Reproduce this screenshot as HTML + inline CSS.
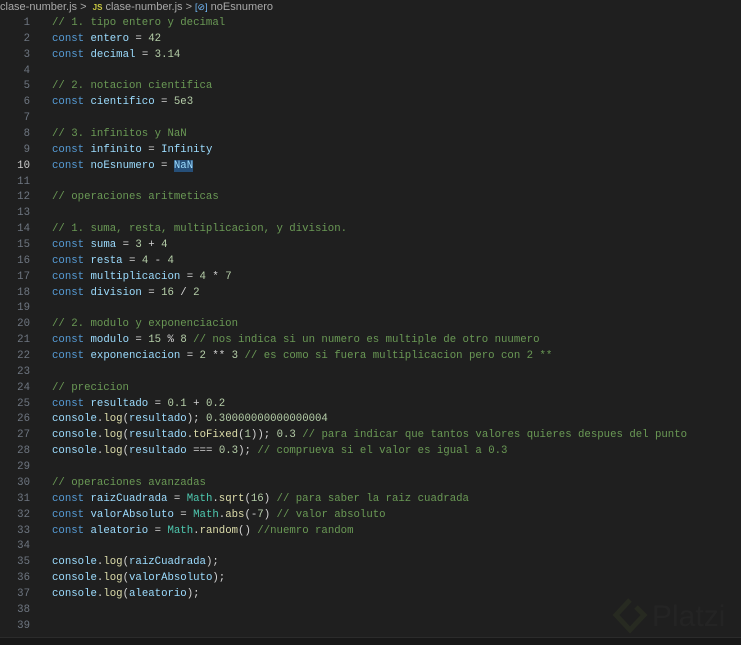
<!DOCTYPE html>
<html><head><style>
body{margin:0;width:741px;height:644px;background:#1f1f1f;overflow:hidden;position:relative;font-family:"Liberation Mono",monospace;}
.bc{position:absolute;top:0;left:0;height:14px;font:11px "Liberation Sans",sans-serif;color:#a9a9a9;white-space:nowrap;line-height:14px;}
.bc .js{color:#cbcb41;font-weight:bold;font-size:8px;}
.bc .v{color:#75beff;font-size:9px;}
.code{position:absolute;top:16px;left:0;}
.l{height:15.87px;line-height:15.87px;font-size:10.7px;white-space:pre;position:relative;}
.n{position:absolute;left:0;width:30px;text-align:right;color:#6e7681;}
.n.a{color:#ccc;}
.t{position:absolute;left:52px;color:#d4d4d4;}
.k{color:#569cd6}.v{color:#9cdcfe}.c{color:#6a9955}.m{color:#b5cea8}.f{color:#dcdcaa}.g{color:#4ec9b0}
.sel{background:#264f78}
.status{position:absolute;left:0;top:637px;width:741px;height:7px;background:#181818;border-top:1px solid #2b2b2b;}
.wm{position:absolute;font:30px "Liberation Sans",sans-serif;color:#242424;}
</style></head><body>
<div class="bc">clase-number.js &gt; &nbsp;<span class="js">JS</span> clase-number.js &gt; <span class="v">[⊘]</span> noEsnumero</div>
<div class="code">
<div class="l"><span class="n">1</span><span class="t c">// 1. tipo entero y decimal</span></div>
<div class="l"><span class="n">2</span><span class="t"><span class="k">const</span> <span class="v">entero</span> = <span class="m">42</span></span></div>
<div class="l"><span class="n">3</span><span class="t"><span class="k">const</span> <span class="v">decimal</span> = <span class="m">3.14</span></span></div>
<div class="l"><span class="n">4</span></div>
<div class="l"><span class="n">5</span><span class="t c">// 2. notacion cientifica</span></div>
<div class="l"><span class="n">6</span><span class="t"><span class="k">const</span> <span class="v">cientifico</span> = <span class="m">5e3</span></span></div>
<div class="l"><span class="n">7</span></div>
<div class="l"><span class="n">8</span><span class="t c">// 3. infinitos y NaN</span></div>
<div class="l"><span class="n">9</span><span class="t"><span class="k">const</span> <span class="v">infinito</span> = <span class="v">Infinity</span></span></div>
<div class="l"><span class="n a">10</span><span class="t"><span class="k">const</span> <span class="v">noEsnumero</span> = <span class="v sel">NaN</span></span></div>
<div class="l"><span class="n">11</span></div>
<div class="l"><span class="n">12</span><span class="t c">// operaciones aritmeticas</span></div>
<div class="l"><span class="n">13</span></div>
<div class="l"><span class="n">14</span><span class="t c">// 1. suma, resta, multiplicacion, y division.</span></div>
<div class="l"><span class="n">15</span><span class="t"><span class="k">const</span> <span class="v">suma</span> = <span class="m">3</span> + <span class="m">4</span></span></div>
<div class="l"><span class="n">16</span><span class="t"><span class="k">const</span> <span class="v">resta</span> = <span class="m">4</span> - <span class="m">4</span></span></div>
<div class="l"><span class="n">17</span><span class="t"><span class="k">const</span> <span class="v">multiplicacion</span> = <span class="m">4</span> * <span class="m">7</span></span></div>
<div class="l"><span class="n">18</span><span class="t"><span class="k">const</span> <span class="v">division</span> = <span class="m">16</span> / <span class="m">2</span></span></div>
<div class="l"><span class="n">19</span></div>
<div class="l"><span class="n">20</span><span class="t c">// 2. modulo y exponenciacion</span></div>
<div class="l"><span class="n">21</span><span class="t"><span class="k">const</span> <span class="v">modulo</span> = <span class="m">15</span> % <span class="m">8</span> <span class="c">// nos indica si un numero es multiple de otro nuumero</span></span></div>
<div class="l"><span class="n">22</span><span class="t"><span class="k">const</span> <span class="v">exponenciacion</span> = <span class="m">2</span> ** <span class="m">3</span> <span class="c">// es como si fuera multiplicacion pero con 2 **</span></span></div>
<div class="l"><span class="n">23</span></div>
<div class="l"><span class="n">24</span><span class="t c">// precicion</span></div>
<div class="l"><span class="n">25</span><span class="t"><span class="k">const</span> <span class="v">resultado</span> = <span class="m">0.1</span> + <span class="m">0.2</span></span></div>
<div class="l"><span class="n">26</span><span class="t"><span class="v">console</span>.<span class="f">log</span>(<span class="v">resultado</span>); <span class="m">0.30000000000000004</span></span></div>
<div class="l"><span class="n">27</span><span class="t"><span class="v">console</span>.<span class="f">log</span>(<span class="v">resultado</span>.<span class="f">toFixed</span>(<span class="m">1</span>)); <span class="m">0.3</span> <span class="c">// para indicar que tantos valores quieres despues del punto</span></span></div>
<div class="l"><span class="n">28</span><span class="t"><span class="v">console</span>.<span class="f">log</span>(<span class="v">resultado</span> === <span class="m">0.3</span>); <span class="c">// comprueva si el valor es igual a 0.3</span></span></div>
<div class="l"><span class="n">29</span></div>
<div class="l"><span class="n">30</span><span class="t c">// operaciones avanzadas</span></div>
<div class="l"><span class="n">31</span><span class="t"><span class="k">const</span> <span class="v">raizCuadrada</span> = <span class="g">Math</span>.<span class="f">sqrt</span>(<span class="m">16</span>) <span class="c">// para saber la raiz cuadrada</span></span></div>
<div class="l"><span class="n">32</span><span class="t"><span class="k">const</span> <span class="v">valorAbsoluto</span> = <span class="g">Math</span>.<span class="f">abs</span>(-<span class="m">7</span>) <span class="c">// valor absoluto</span></span></div>
<div class="l"><span class="n">33</span><span class="t"><span class="k">const</span> <span class="v">aleatorio</span> = <span class="g">Math</span>.<span class="f">random</span>() <span class="c">//nuemro random</span></span></div>
<div class="l"><span class="n">34</span></div>
<div class="l"><span class="n">35</span><span class="t"><span class="v">console</span>.<span class="f">log</span>(<span class="v">raizCuadrada</span>);</span></div>
<div class="l"><span class="n">36</span><span class="t"><span class="v">console</span>.<span class="f">log</span>(<span class="v">valorAbsoluto</span>);</span></div>
<div class="l"><span class="n">37</span><span class="t"><span class="v">console</span>.<span class="f">log</span>(<span class="v">aleatorio</span>);</span></div>
<div class="l"><span class="n">38</span></div>
<div class="l"><span class="n">39</span></div>
</div>
<svg style="position:absolute;left:612px;top:597px" width="36" height="40" viewBox="0 0 36 40"><path d="M18 3 L4 18 L18 33 L32 18 L24 10" fill="none" stroke="#272a21" stroke-width="5"/></svg>
<div class="wm" style="left:652px;top:600px">Platzi</div>
<div class="status"></div>
</body></html>
